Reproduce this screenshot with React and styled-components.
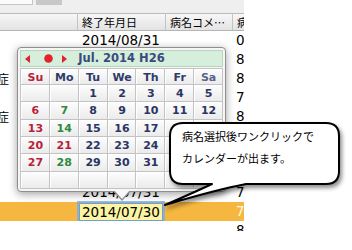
import React from "react";
import styled, { createGlobalStyle } from "styled-components";

const GlobalStyle = createGlobalStyle`
  html, body { margin: 0; padding: 0; background: #fff; }
  body {
    width: 352px; height: 250px; overflow: hidden;
    font-family: "DejaVu Sans", "Noto Sans CJK JP", sans-serif;
    color: #000;
  }
  * { box-sizing: border-box; }
`;

const Stage = styled.div`
  position: relative;
  width: 352px;
  height: 250px;
  overflow: hidden;
  background: #fff;
`;

const TableView = styled.div`
  width: 244px;
  height: 231px;
  overflow: hidden;
  display: flex;
  flex-direction: column;
`;

const TopBar = styled.div`
  flex: none;
  height: 14px;
  background: #efefef;
  border-bottom: 1px solid #bcbcbc;
  display: flex;
  align-items: flex-start;
  gap: 3px;
`;

const SearchStub = styled.div`
  width: 33px;
  height: 5px;
  background: #fbfbfb;
  border-right: 1px solid #c6c6c6;
  border-bottom: 1px solid #c6c6c6;
`;

const ButtonStub = styled.div`
  width: 26px;
  height: 5px;
  background: #c8c8c8;
`;

const COLS = "77px 88px 67px 12px";

const HeaderRow = styled.div`
  flex: none;
  display: grid;
  grid-template-columns: ${COLS};
  height: 17px;
  background: linear-gradient(#f7f7f7, #e3e3e3);
  border-bottom: 1px solid #b5b5b5;
  font-family: "Noto Sans CJK JP", sans-serif;
  font-size: 11px;
  line-height: 16px;
`;

const HeaderCell = styled.div`
  padding-left: 4px;
  white-space: nowrap;
  overflow: hidden;
  border-left: ${(p) => (p.$first ? "none" : "1px solid #c4c4c4")};
`;

const Row = styled.div`
  flex: none;
  display: grid;
  grid-template-columns: ${COLS};
  height: 19px;
  align-items: center;
  background: ${(p) => (p.$selected ? "#f5b73f" : "#fff")};
  font-size: 13.5px;
  line-height: 19px;
`;

const Cell = styled.div`
  padding-left: ${(p) => p.$pad ?? 5}px;
  white-space: nowrap;
  overflow: hidden;
  color: ${(p) => p.$color || "#000"};
`;

const NameCell = styled.div`
  font-family: "Noto Sans CJK JP", sans-serif;
  font-size: 12px;
  text-indent: -3px;
  overflow: hidden;
  white-space: nowrap;
`;

const DateField = styled.div`
  margin-left: 2px;
  width: 84px;
  height: 18px;
  background: #fbf4a3;
  border: 1px solid #6f9fd4;
  box-shadow: 0 0 0 2px rgba(126, 172, 226, 0.8);
  padding-left: 2px;
  line-height: 16px;
  font-size: 13.5px;
`;

/* ---------- calendar popover ---------- */

const Popover = styled.div`
  position: absolute;
  left: 17px;
  top: 47px;
  width: 209px;
  height: 145px;
  background: #f6f6f6;
  border: 1px solid #8e8e8e;
  border-radius: 4px;
  box-shadow: 0 2px 8px rgba(0, 0, 0, 0.38);
  padding: 2px;
  display: flex;
  flex-direction: column;
  gap: 1px;

  &::before {
    content: "";
    position: absolute;
    left: 50%;
    top: 100%;
    margin-left: -9px;
    border-left: 9px solid transparent;
    border-right: 9px solid transparent;
    border-top: 10px solid #8e8e8e;
  }
  &::after {
    content: "";
    position: absolute;
    left: 50%;
    top: 100%;
    margin-left: -8px;
    margin-top: -1px;
    border-left: 8px solid transparent;
    border-right: 8px solid transparent;
    border-top: 9px solid #f8f8f8;
  }
`;

const CalHeader = styled.div`
  flex: none;
  height: 17px;
  background: #d6eedc;
  border: 1px solid #b9d4bf;
  display: grid;
  grid-template-columns: 1fr auto 1fr;
  align-items: center;
`;

const Nav = styled.div`
  display: flex;
  align-items: center;
  padding-left: 4px;
`;

const NavIcon = styled.svg`
  display: block;
  flex: none;
  margin-left: ${(p) => p.$gap || 0}px;
`;

const Title = styled.div`
  font-family: "DejaVu Sans", sans-serif;
  font-weight: bold;
  font-size: 11.5px;
  color: #394a7d;
  white-space: nowrap;
  line-height: 15px;
`;

const Grid = styled.div`
  flex: 1;
  display: grid;
  grid-template-columns: repeat(7, 1fr);
  grid-template-rows: 15px repeat(6, 1fr);
  gap: 1px;
  padding: 1px;
  background: #c3c3c3;
`;

const DayCell = styled.div`
  background: linear-gradient(#fcfcfc, #ebebeb);
  border-top: 1px solid #fff;
  border-left: 1px solid #fff;
  display: flex;
  align-items: center;
  justify-content: center;
  font-family: "DejaVu Sans", sans-serif;
  font-weight: bold;
  font-size: 11px;
  color: ${(p) => p.$color};
`;

/* ---------- callout ---------- */

const Callout = styled.div`
  position: absolute;
  left: 160px;
  top: 118px;
  width: 190px;
  height: 95px;
  padding: 7px 0 0 22px;
`;

const CalloutShape = styled.svg`
  position: absolute;
  left: 0;
  top: 0;
  overflow: visible;
  filter: drop-shadow(2px 3px 2px rgba(0, 0, 0, 0.45));
`;

const CalloutText = styled.div`
  position: relative;
  font-family: "Noto Sans CJK JP", sans-serif;
  font-size: 11px;
  line-height: 22px;
  color: #000;
  white-space: nowrap;
`;

const NAVY = "#2b3564";
const RED = "#b91f3b";
const GREEN = "#2f8a3b";

const dayNames = [
  { t: "Su", c: RED },
  { t: "Mo", c: "#2f3b6b" },
  { t: "Tu", c: "#2f3b6b" },
  { t: "We", c: "#2f3b6b" },
  { t: "Th", c: "#2f3b6b" },
  { t: "Fr", c: "#2f3b6b" },
  { t: "Sa", c: "#55648c" },
];

const holidays = [21];

function buildDays() {
  const cells = [];
  const offset = 2; // Jul 1 2014 is a Tuesday
  for (let i = 0; i < 42; i++) {
    const d = i - offset + 1;
    if (d < 1 || d > 31) {
      cells.push({ key: i, t: "", c: NAVY });
      continue;
    }
    const dow = i % 7;
    let c = NAVY;
    if (dow === 0 || holidays.includes(d)) c = RED;
    else if (dow === 1) c = GREEN;
    cells.push({ key: i, t: String(d), c });
  }
  return cells;
}

const rows = [
  { date: "2014/08/31", n: "0" },
  { n: "8" },
  { name: "症", n: "8" },
  { n: "7" },
  { name: "症", n: "8" },
  {},
  {},
  {},
  { date: "2014/07/31", n: "7" },
  { date: "2014/07/30", n: "7", selected: true },
  { n: "8" },
];

export default function App() {
  const days = buildDays();
  return (
    <Stage>
      <GlobalStyle />
      <TableView>
        <TopBar>
          <SearchStub />
          <ButtonStub />
        </TopBar>
        <HeaderRow>
          <HeaderCell $first />
          <HeaderCell>終了年月日</HeaderCell>
          <HeaderCell>病名コメ…</HeaderCell>
          <HeaderCell>病</HeaderCell>
        </HeaderRow>
        {rows.map((r, i) => (
          <Row key={i} $selected={r.selected}>
            <NameCell>{r.name || ""}</NameCell>
            {r.selected ? (
              <div>
                <DateField>{r.date}</DateField>
              </div>
            ) : (
              <Cell>{r.date || ""}</Cell>
            )}
            <Cell />
            <Cell $pad={4} $color={r.selected ? "#fffbe8" : "#000"}>
              {r.n || ""}
            </Cell>
          </Row>
        ))}
      </TableView>

      <Popover>
        <CalHeader>
          <Nav>
            <NavIcon width="5" height="8" viewBox="0 0 5 8">
              <polygon points="5,0 5,8 0,4" fill="#e3232c" />
            </NavIcon>
            <NavIcon $gap={14} width="9" height="9" viewBox="0 0 9 9">
              <circle cx="4.5" cy="4.5" r="4.3" fill="#e3232c" />
            </NavIcon>
            <NavIcon $gap={9} width="5" height="8" viewBox="0 0 5 8">
              <polygon points="0,0 0,8 5,4" fill="#e3232c" />
            </NavIcon>
          </Nav>
          <Title>Jul. 2014 H26</Title>
          <div />
        </CalHeader>
        <Grid>
          {dayNames.map((d) => (
            <DayCell key={d.t} $color={d.c}>
              {d.t}
            </DayCell>
          ))}
          {days.map((d) => (
            <DayCell key={d.key} $color={d.c}>
              {d.t}
            </DayCell>
          ))}
        </Grid>
      </Popover>

      <Callout>
        <CalloutShape width="190" height="95" viewBox="0 0 190 95">
          <path
            d="M 23,5 H 166 Q 179,5 179,18 V 53 Q 179,66 166,66 H 86 Q 55,72 5,87 Q 35,74 52,66 H 23 Q 10,66 10,53 V 18 Q 10,5 23,5 Z"
            fill="#fff"
            stroke="#000"
            strokeWidth="2"
            strokeLinejoin="round"
          />
        </CalloutShape>
        <CalloutText>
          病名選択後ワンクリックで
          <br />
          カレンダーが出ます。
        </CalloutText>
      </Callout>
    </Stage>
  );
}
